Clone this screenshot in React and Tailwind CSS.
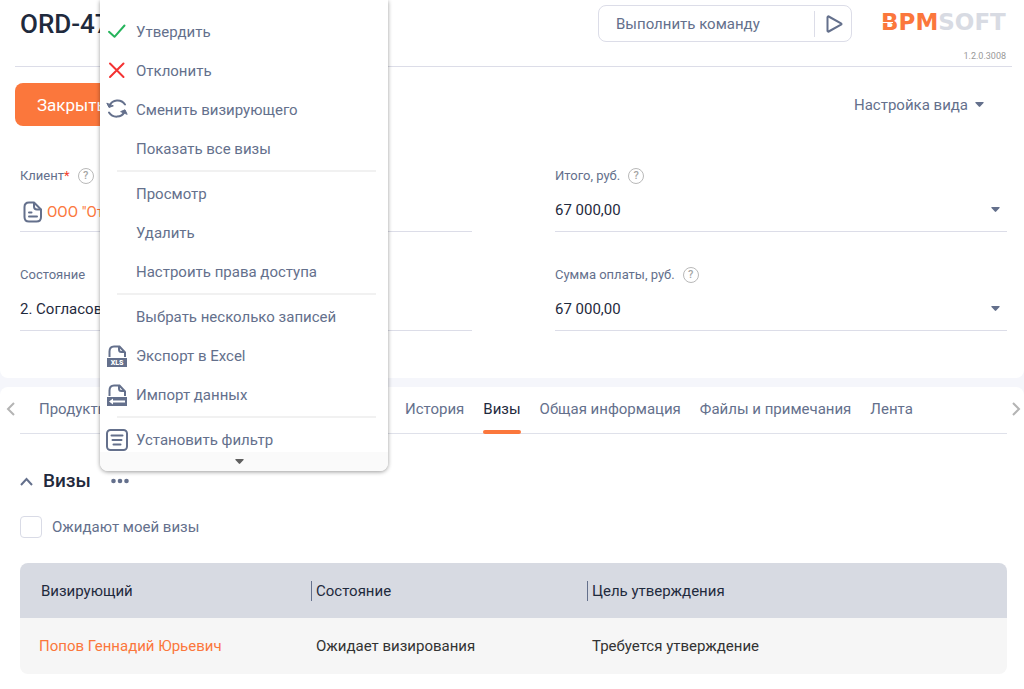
import { useState } from 'react'

const TABS = ['История', 'Визы', 'Общая информация', 'Файлы и примечания', 'Лента']

const MENU = [
  [
    { label: 'Утвердить', icon: CheckIcon },
    { label: 'Отклонить', icon: CrossIcon },
    { label: 'Сменить визирующего', icon: SwapIcon },
    { label: 'Показать все визы' },
  ],
  [{ label: 'Просмотр' }, { label: 'Удалить' }, { label: 'Настроить права доступа' }],
  [
    { label: 'Выбрать несколько записей' },
    { label: 'Экспорт в Excel', icon: ExportIcon },
    { label: 'Импорт данных', icon: ImportIcon },
  ],
  [{ label: 'Установить фильтр', icon: FilterIcon }],
]

const VISAS = [
  { id: 1, approver: 'Попов Геннадий Юрьевич', state: 'Ожидает визирования', goal: 'Требуется утверждение' },
]

export default function App() {
  const [tab, setTab] = useState('Визы')

  return (
    <div className="relative min-h-screen bg-[#f5f6fb] font-['Roboto','Liberation_Sans',sans-serif] text-[15px] leading-5 text-[#64708c]">
      <main className="flex min-h-screen flex-col gap-[9px]">
        <section className="rounded-b-lg bg-white pb-[47px]">
          <Header />

          <div className="flex items-center justify-between pt-4 pr-10 pl-[15px]">
            <button className="h-[43px] rounded-lg bg-[#fb773c] px-[22px] text-[17px] text-white">Закрыть</button>
            <button className="flex items-center gap-[7px]">
              Настройка вида
              <Caret />
            </button>
          </div>

          <div className="grid grid-cols-2 gap-x-[83px] gap-y-[31px] pt-[38px] pr-[17px] pl-5">
            <Field id="client" label="Клиент" required help>
              <div className="flex items-center gap-1 pt-1 pl-px">
                <FileIcon />
                <a id="client" href="#client" className="text-[#fb773c]">ООО "От</a>
              </div>
            </Field>
            <Field id="total" label="Итого, руб." help>
              <AmountInput id="total" value="67 000,00" />
            </Field>
            <Field id="state" label="Состояние">
              <input id="state" defaultValue="2. Согласов" className="min-w-0 flex-1 text-[#1f2a3d] outline-none" />
            </Field>
            <Field id="paid" label="Сумма оплаты, руб." help>
              <AmountInput id="paid" value="67 000,00" />
            </Field>
          </div>
        </section>

        <section className="flex-1 rounded-t-lg bg-white pb-[15px]">
          <div className="flex">
            <button aria-label="Назад" className="flex w-5 items-center pb-1 pl-1.5 text-[#b4b4b4]">
              <Chevron d="M8 2 2 8l6 6" />
            </button>
            <nav className="flex h-[47px] min-w-0 flex-1 border-b border-[#dfe1ea] pl-[19px]">
              <div className="flex w-[366px] shrink-0">
                <Tab label="Продукты" onClick={() => setTab('Продукты')} active={tab === 'Продукты'} />
              </div>
              <div className="flex gap-[19px]">
                {TABS.map((t) => (
                  <Tab key={t} label={t} active={t === tab} onClick={() => setTab(t)} />
                ))}
              </div>
            </nav>
            <button aria-label="Вперёд" className="flex w-[17px] items-center pb-1 pl-1 text-[#b4b4b4]">
              <Chevron d="m2 2 6 6-6 6" />
            </button>
          </div>

          <div className="pt-[33px] pr-[17px] pl-5">
            <div className="flex items-center">
              <button aria-label="Свернуть" className="w-[23px]">
                <svg width="13" height="9" viewBox="0 0 13 9" fill="none" stroke="currentColor" strokeWidth="2"><path d="m1 8 5.500-6L12 8" /></svg>
              </button>
              <h2 className="text-[19px] leading-7 font-medium text-[#1f2a3d]">Визы</h2>
              <button aria-label="Действия" className="ml-5">
                <svg width="18" height="6" viewBox="0 0 18 6" fill="currentColor"><circle cx="2.500" cy="3" r="2.300" /><circle cx="9" cy="3" r="2.300" /><circle cx="15.500" cy="3" r="2.300" /></svg>
              </button>
            </div>

            <label className="flex items-center gap-2.5 pt-[21px]">
              <input type="checkbox" className="size-[22px] appearance-none rounded border border-[#d9dbe6] checked:bg-[#fb773c]" />
              Ожидают моей визы
            </label>

            <VisaTable />
          </div>
        </section>
      </main>

      <ActionsMenu />
    </div>
  )
}

function Header() {
  return (
    <header className="ml-[15px] mr-3 flex h-[67px] items-start border-b border-[#dcdde8] pl-[5px]">
      <h1 className="flex-1 pt-2 text-[26px] leading-8 font-medium text-[#1f2a3d]">ORD-47</h1>
      <div className="mt-[5px] flex h-[37px] w-[254px] items-center rounded-lg border border-[#dcdde8]">
        <input
          aria-label="Выполнить команду"
          placeholder="Выполнить команду"
          className="min-w-0 flex-1 pl-[17px] outline-none placeholder:text-[#64708c]"
        />
        <button aria-label="Выполнить" className="flex h-[26px] w-[37px] items-center border-l border-[#dcdde8] pl-[11px]">
          <svg width="17" height="18" viewBox="0 0 17 18" fill="none" stroke="currentColor" strokeWidth="2" strokeLinejoin="round"><path d="M1.500 2.300v13.400c0 .8.600 1.100 1.200.8L15 9.700c.7-.4.7-1 0-1.400L2.700 1.500c-.6-.3-1.200 0-1.200.8Z" /></svg>
        </button>
      </div>
      <div className="flex w-[160px] flex-col items-end">
        <div className="w-full pt-2 pl-[29px] font-['DejaVu_Sans',sans-serif] text-[23px] leading-7 font-bold whitespace-nowrap">
          <span className="relative text-[#fb773c]">
            BPM
            {/* Slit through the B */}
            <span className="absolute top-1/2 left-0 h-px w-3 bg-white" />
          </span>
          <span className="text-[#d8dbe3]">SOFT</span>
        </div>
        <span className="pt-3.5 pr-1.5 text-[9px] leading-3 text-[#999999]">1.2.0.3008</span>
      </div>
    </header>
  )
}

function Field({ id, label, required, help, children }) {
  return (
    <div>
      <div className="flex h-6 items-center text-[13px]">
        <label htmlFor={id}>
          {label}
          {required && <span className="text-[#f5402c]">*</span>}
        </label>
        {help && (
          <button aria-label={`Справка: ${label}`} className="ml-2 flex size-4 items-center justify-center rounded-full border border-[#b9b9b9] text-[11px] leading-3 font-medium text-[#a5a5a5]">?</button>
        )}
      </div>
      <div className="flex h-11 items-center border-b border-[#dcdde8]">{children}</div>
    </div>
  )
}

function AmountInput({ id, value }) {
  return (
    <>
      <input id={id} defaultValue={value} className="min-w-0 flex-1 text-[#1f2a3d] outline-none" />
      <button aria-label="Показать расчёт" className="pr-[7px]">
        <Caret />
      </button>
    </>
  )
}

function Tab({ label, active, onClick }) {
  return (
    <button
      onClick={onClick}
      className={
        active
          ? 'flex h-[47px] flex-col items-center whitespace-nowrap text-[#1f2a3d]'
          : 'flex h-[47px] flex-col items-center whitespace-nowrap'
      }
    >
      <span className="flex-1 pt-3">{label}</span>
      {active && <span className="h-1 w-full rounded-sm bg-[#fb773c]" />}
    </button>
  )
}

function VisaTable() {
  return (
    <div className="mt-[25px] overflow-hidden rounded-lg">
      <table className="w-full table-fixed text-left text-[#1f2a3d]">
        <thead className="bg-[#d7dae2]">
          <tr className="h-[55px]">
            <th className="w-[291px] pl-[21px] font-normal">Визирующий</th>
            <th className="w-[276px] font-normal">
              <div className="border-l border-[#64708c] pl-1">Состояние</div>
            </th>
            <th className="font-normal">
              <div className="border-l border-[#64708c] pl-1">Цель утверждения</div>
            </th>
          </tr>
        </thead>
        <tbody className="bg-[#f6f6f6] text-[#333333]">
          {VISAS.map((v) => (
            <tr key={v.id} className="h-14">
              <td className="pl-[19px]"><a href="#approver" className="text-[#fb773c]">{v.approver}</a></td>
              <td className="pl-[5px]">{v.state}</td>
              <td className="pl-[5px]">{v.goal}</td>
            </tr>
          ))}
        </tbody>
      </table>
    </div>
  )
}

function ActionsMenu() {
  return (
    <div className="absolute top-0 left-[100px] w-[288px] overflow-hidden rounded-b-lg bg-white shadow-[0_1px_4px_rgba(0,0,0,0.4)]">
      <div className="max-h-[452px] overflow-hidden pt-3">
        {MENU.map((group, i) => (
          <div key={i}>
            {i > 0 && <hr className="my-0.5 mr-3 ml-[17px] border-t-2 border-[#f1f1f1]" />}
            {group.map(({ label, icon: Icon }) => (
              <button key={label} className="flex h-[39px] w-full items-center pl-1.5 text-left">
                <span className="flex w-[30px]">{Icon && <Icon />}</span>
                {label}
              </button>
            ))}
          </div>
        ))}
      </div>
      <button aria-label="Прокрутить вниз" className="flex h-[19px] w-full items-center justify-center bg-[#fafafa] pr-2.5 text-[#606060]">
        <Caret />
      </button>
    </div>
  )
}

function Caret() {
  return <svg width="9" height="5" viewBox="0 0 9 5" fill="currentColor"><path d="M1 0h7c.8 0 1 .5.500 1L5.200 4.600a1 1 0 0 1-1.400 0L.5 1C0 .5.200 0 1 0Z" /></svg>
}

function Chevron({ d }) {
  return <svg width="10" height="16" viewBox="0 0 10 16" fill="none" stroke="currentColor" strokeWidth="2"><path d={d} /></svg>
}

function FileIcon() {
  return (
    <svg width="22" height="22" viewBox="0 0 22 22" fill="none" stroke="currentColor" strokeWidth="2" strokeLinejoin="round" strokeLinecap="round">
      <path d="M13 1.500H8C5 1.500 3.500 3 3.500 6v10c0 3 1.500 4.500 4.500 4.500h7.500c3 0 4.500-1.500 4.500-4.500V8.500L13 1.500Z" />
      <path d="M13 2v3.500c0 2 1 3 3 3h3.500M8 11.500h2.500M8 15.500h8" />
    </svg>
  )
}

function CheckIcon() {
  return <svg width="22" height="22" viewBox="0 0 22 22" fill="none" stroke="#26b45c" strokeWidth="2" strokeLinecap="round" strokeLinejoin="round"><path d="m3 10.800 5.500 5L18.500 4.500" /></svg>
}

function CrossIcon() {
  return <svg width="22" height="22" viewBox="0 0 22 22" fill="none" stroke="#f43232" strokeWidth="2" strokeLinecap="round"><path d="m4 3.500 13.500 13.500M17.500 3.500 4 17" /></svg>
}

function SwapIcon() {
  return (
    <svg width="22" height="22" viewBox="0 0 22 22" fill="none" stroke="currentColor" strokeWidth="2" strokeLinecap="round">
      <path d="M19 5.500a9 9 0 0 0-15.600 1.200M3 13.500a9 9 0 0 0 15.600-.8" />
      <path d="m1 4.500 2 4 4-1.500ZM21 15l-2-4.200-4 1.700Z" fill="currentColor" strokeWidth="1" strokeLinejoin="round" />
    </svg>
  )
}

function SheetTop() {
  return (
    <>
      <path d="M3.500 12V6.500C3.500 3 5 1.500 8 1.500h5.500l5.500 6V12" fill="none" stroke="currentColor" strokeWidth="2" />
      <path d="M13 1.500v3c0 1.500 1 2.500 2.500 2.500H19" fill="none" stroke="currentColor" strokeWidth="2" />
    </>
  )
}

function ExportIcon() {
  return (
    <svg width="22" height="22" viewBox="0 0 22 22" fill="currentColor">
      <SheetTop />
      <path d="M1 13h20v9H1z" />
      <text x="11" y="20" textAnchor="middle" fontSize="7" fontWeight="900" fill="#fff">XLS</text>
    </svg>
  )
}

function ImportIcon() {
  return (
    <svg width="22" height="22" viewBox="0 0 22 22" fill="currentColor">
      <SheetTop />
      <path d="M1 13h20v9H1z" />
      <path d="m3 17.500 4-3v2h12v2H7v2z" fill="#fff" />
    </svg>
  )
}

function FilterIcon() {
  return (
    <svg width="22" height="22" viewBox="0 0 22 22" fill="none" stroke="currentColor" strokeWidth="2" strokeLinecap="round">
      <rect x="1" y="1" width="20" height="20" rx="3.500" />
      <path d="M5.500 6.500h11M6.500 11h9M7.500 15.500h7" />
    </svg>
  )
}
